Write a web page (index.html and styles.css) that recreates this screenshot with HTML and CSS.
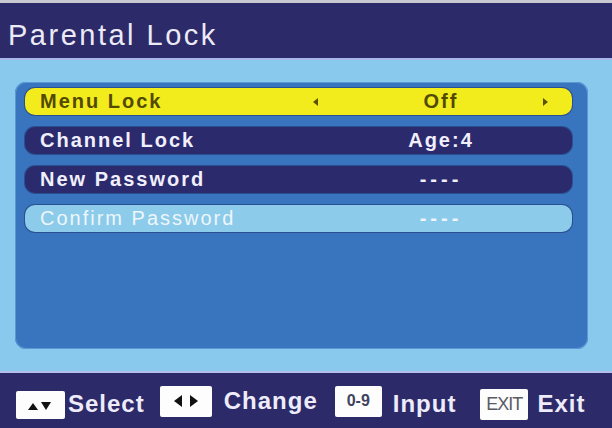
FILE: index.html
```html
<!DOCTYPE html>
<html>
<head>
<meta charset="utf-8">
<link rel="stylesheet" href="styles.css">
</head>
<body>
<div class="screen">
  <header class="header">Parental Lock</header>
  <main class="main">
    <div class="panel">
      <div class="row row-active">
        <span class="label">Menu Lock</span>
        <span class="value">
          <svg class="arr arr-l" width="5" height="8" viewBox="0 0 5 8"><path d="M5 0 L0 4 L5 8 Z" fill="#5a5200"/></svg>
          Off
          <svg class="arr arr-r" width="5" height="8" viewBox="0 0 5 8"><path d="M0 0 L5 4 L0 8 Z" fill="#5a5200"/></svg>
        </span>
      </div>
      <div class="row row-dark">
        <span class="label">Channel Lock</span>
        <span class="value">Age:4</span>
      </div>
      <div class="row row-dark">
        <span class="label">New Password</span>
        <span class="value dashes">----</span>
      </div>
      <div class="row row-light">
        <span class="label">Confirm Password</span>
        <span class="value dashes">----</span>
      </div>
    </div>
  </main>
  <footer class="footer">
    <span class="key key-ud">
      <svg width="30" height="12" viewBox="0 0 30 12"><path d="M2 11 L7 4 L12 11 Z" fill="#111"/><path d="M15 3 L25 3 L20 11 Z" fill="#111"/></svg>
    </span>
    <span class="hint h-select">Select</span>
    <span class="key key-lr">
      <svg width="30" height="14" viewBox="0 0 30 14"><path d="M11 1 L3 7 L11 13 Z" fill="#111"/><path d="M19 1 L27 7 L19 13 Z" fill="#111"/></svg>
    </span>
    <span class="hint h-change">Change</span>
    <span class="key key-num">0-9</span>
    <span class="hint h-input">Input</span>
    <span class="key key-exit">EXIT</span>
    <span class="hint h-exit">Exit</span>
  </footer>
</div>
</body>
</html>
```
FILE: styles.css
```css
html, body {
  margin: 0;
  padding: 0;
  background: #2c2a69;
}
.screen {
  width: 612px;
  height: 428px;
  display: flex;
  flex-direction: column;
  font-family: "Liberation Sans", Arial, sans-serif;
  overflow: hidden;
}
.header {
  height: 37px;
  border-top: 3px solid #c9c9d4;
  background: #2d2a69;
  color: #eceaf6;
  font-size: 29px;
  line-height: 28px;
  letter-spacing: 2.5px;
  padding: 18px 0 0 8px;
  flex: none;
}
.main {
  background: #89c9ee;
  border-top: 2px solid #a8b6ea;
  border-bottom: 2px solid #b4bfee;
  padding: 22px 24px 22px 15px;
  box-sizing: border-box;
  height: 315px;
  flex: none;
}
.panel {
  height: 100%;
  box-sizing: border-box;
  background: #3875be;
  border-radius: 11px;
  box-shadow: inset 0 0 0 1px #5d98d4;
  padding: 6px 16px 0 10px;
  display: flex;
  flex-direction: column;
  gap: 12px;
}
.row {
  height: 27px;
  border-radius: 10px;
  display: flex;
  align-items: center;
  font-size: 20px;
  font-weight: bold;
  letter-spacing: 2px;
  line-height: 27px;
  box-shadow: 0 0 0 1px rgba(25, 35, 90, 0.45);
}
.row-active {
  background: #f3ec1c;
  color: #524a00;
}
.row-dark {
  background: #2b2a6d;
  color: #f1effc;
}
.row-light {
  background: #8ccbea;
  color: #eef6fb;
  font-weight: normal;
}
.label {
  width: 285px;
  padding-left: 15px;
  box-sizing: border-box;
  white-space: nowrap;
}
.value {
  position: relative;
  width: 262px;
  text-align: center;
  white-space: nowrap;
}
.row-light .value {
  font-weight: bold;
}
.dashes {
  letter-spacing: 4px;
}
.arr {
  position: absolute;
  top: 10px;
}
.arr-l { left: 3px; }
.arr-r { right: 24px; }
.footer {
  flex: 1;
  background: #2c2a69;
  display: flex;
  align-items: center;
  padding-left: 16px;
  padding-top: 7px;
  color: #eeecfa;
  font-size: 24px;
  font-weight: bold;
  letter-spacing: 1px;
}
.key {
  background: #fdfdfd;
  border-radius: 2px;
  height: 29px;
  display: flex;
  align-items: center;
  justify-content: center;
  letter-spacing: 0;
  flex: none;
}
.key-ud { width: 49px; margin-top: 2px; height: 28px; }
.key-lr { width: 52px; margin-left: 15px; margin-top: -6px; height: 31px; }
.key-num {
  width: 47px;
  margin-left: 17px;
  margin-top: -6px;
  height: 31px;
  font-size: 16px;
  color: #3f4360;
}
.key-exit {
  width: 48px;
  margin-left: 24px;
  height: 31px;
  font-size: 18px;
  font-weight: normal;
  color: #5a5a64;
  letter-spacing: -1px;
}
.hint { white-space: nowrap; }
.h-select { margin-left: 3px; }
.h-change { margin-left: 12px; margin-top: -6px; }
.h-input { margin-left: 11px; }
.h-exit { margin-left: 9px; }
```
